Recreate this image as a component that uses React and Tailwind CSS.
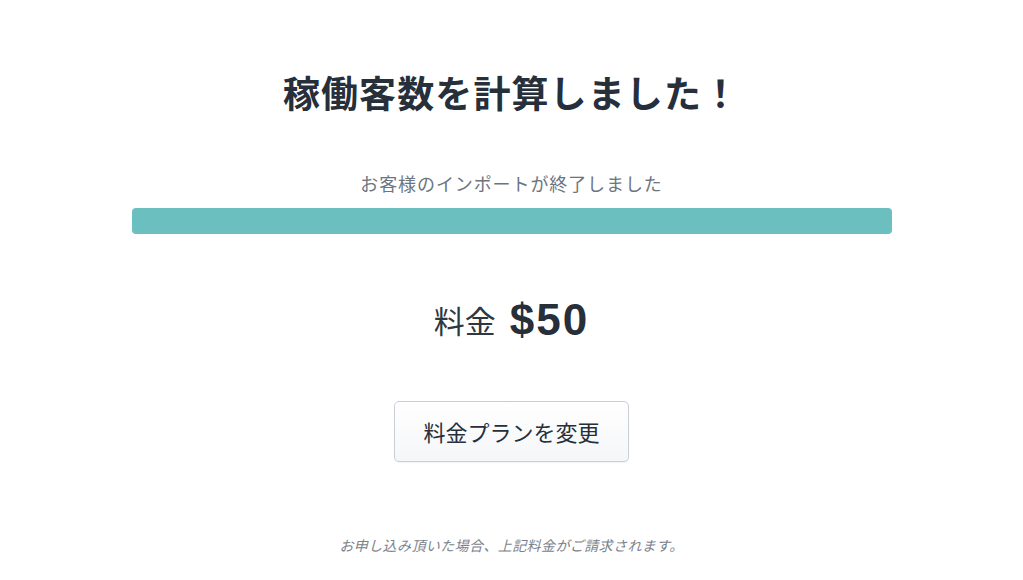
export default function App() {
  const font = { fontFamily: '"Noto Sans CJK JP", "Noto Sans", sans-serif' };
  return (
    <div className="w-[1023px] h-[580px] bg-white flex flex-col items-center text-[#262f3a]" style={font}>
      <h1 className="mt-[68px] h-[48px] leading-[48px] text-[37px] font-bold tracking-[1.1px]">稼働客数を計算しました！</h1>

      <p className="mt-[54px] h-[26px] text-[18px] leading-[26px] tracking-[0.9px] text-[#6b7580]">お客様のインポートが終了しました</p>
      <div className="mt-[12px] w-[760px] h-[26px] rounded-[4px] bg-[#6cbfbf]"></div>

      <div className="mt-[58px] flex items-center gap-[14px] h-[56px]">
        <span className="text-[31px] text-[#2f3740]">料金</span>
        <span className="text-[44px] font-bold tracking-[2px]" style={{ fontFamily: '"Liberation Sans", "Noto Sans", sans-serif' }}>$50</span>
      </div>

      <button className="mt-[53px] w-[235px] h-[61px] rounded-[5px] border border-[#c9ced6] bg-gradient-to-b from-white to-[#f5f6f8] text-[22px] text-[#262f3a] shadow-[0_1px_1px_rgba(0,0,0,0.05)]">
        料金プランを変更
      </button>

      <p className="mt-[73px] h-[20px] leading-[20px] text-[14px] tracking-[0.4px] italic text-[#7a828c]">お申し込み頂いた場合、上記料金がご請求されます。</p>
    </div>
  );
}
